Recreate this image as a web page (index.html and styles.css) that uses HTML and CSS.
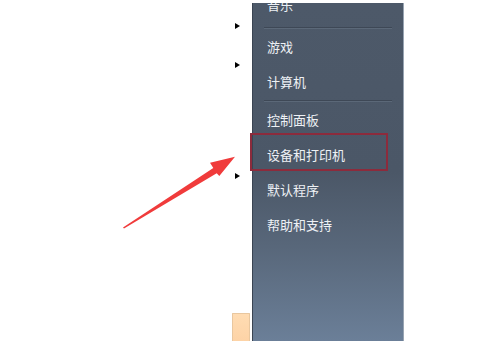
FILE: index.html
```html
<!DOCTYPE html>
<html lang="zh-CN">
<head>
<meta charset="utf-8">
<link rel="stylesheet" href="styles.css">
</head>
<body>
<div class="screen">
  <div class="gutter">
    <span class="tri tri-1"></span>
    <span class="tri tri-2"></span>
    <span class="tri tri-3"></span>
    <span class="task-btn"></span>
  </div>
  <div class="panel">
    <div class="item first">音乐</div>
    <div class="sep"></div>
    <div class="item">游戏</div>
    <div class="item">计算机</div>
    <div class="sep"></div>
    <div class="item">控制面板</div>
    <div class="item">设备和打印机</div>
    <div class="item">默认程序</div>
    <div class="item">帮助和支持</div>
  </div>
  <div class="highlight"></div>
  <svg class="arrow" width="496" height="341" viewBox="0 0 496 341">
    <polygon points="123,227.5 213.3,168 210,162.7 235,156.7 219.3,176 216.7,173.3 124,228.5" fill="#f03b3b"/>
  </svg>
</div>
</body>
</html>
```
FILE: styles.css
```css
html, body {
  margin: 0;
  padding: 0;
  background: #ffffff;
}
.screen {
  position: relative;
  width: 496px;
  height: 341px;
  overflow: hidden;
  display: flex;
  background: #ffffff;
  font-family: "Noto Sans CJK SC", "Noto Sans", sans-serif;
}
.gutter {
  width: 252px;
  height: 341px;
  display: flex;
  flex-direction: column;
  align-items: flex-end;
}
.tri {
  width: 0;
  height: 0;
  border-top: 3.5px solid transparent;
  border-bottom: 3.5px solid transparent;
  border-left: 5px solid #000;
  margin-right: 12px;
}
.tri-1 { margin-top: 22.5px; }
.tri-2 { margin-top: 33px; }
.tri-3 { margin-top: 105px; }
.task-btn {
  margin-top: auto;
  margin-right: 2px;
  width: 18px;
  height: 28px;
  box-sizing: border-box;
  background: linear-gradient(#ffdcb3, #fdd3a6);
  border: 1px solid #e9c79f;
  border-bottom: none;
  border-radius: 1px 1px 0 0;
}
.panel {
  margin-top: 3px;
  width: 152px;
  height: 338px;
  box-sizing: border-box;
  overflow: hidden;
  border-left: 1px solid #3a4452;
  border-right: 1px solid #98a4b2;
  background: linear-gradient(#4d5969 0%, #4b5767 50%, #58677a 72%, #6b7f98 100%);
  display: flex;
  flex-direction: column;
}
.item {
  height: 35px;
  line-height: 35px;
  padding-left: 14px;
  color: #eef1f5;
  font-size: 13px;
  white-space: nowrap;
  flex-shrink: 0;
}
.item.first {
  margin-top: -12.5px;
  line-height: 27px;
}
.sep {
  flex-shrink: 0;
  height: 1px;
  margin: 1px 11px 1px 11px;
  background: #3e4856;
  box-shadow: 0 1px 0 rgba(120, 134, 152, 0.35);
}
.highlight {
  position: absolute;
  left: 250px;
  top: 133px;
  width: 138px;
  height: 38px;
  box-sizing: border-box;
  border: 2px solid #8c2b3c;
}
.arrow {
  position: absolute;
  left: 0;
  top: 0;
  pointer-events: none;
}
```
